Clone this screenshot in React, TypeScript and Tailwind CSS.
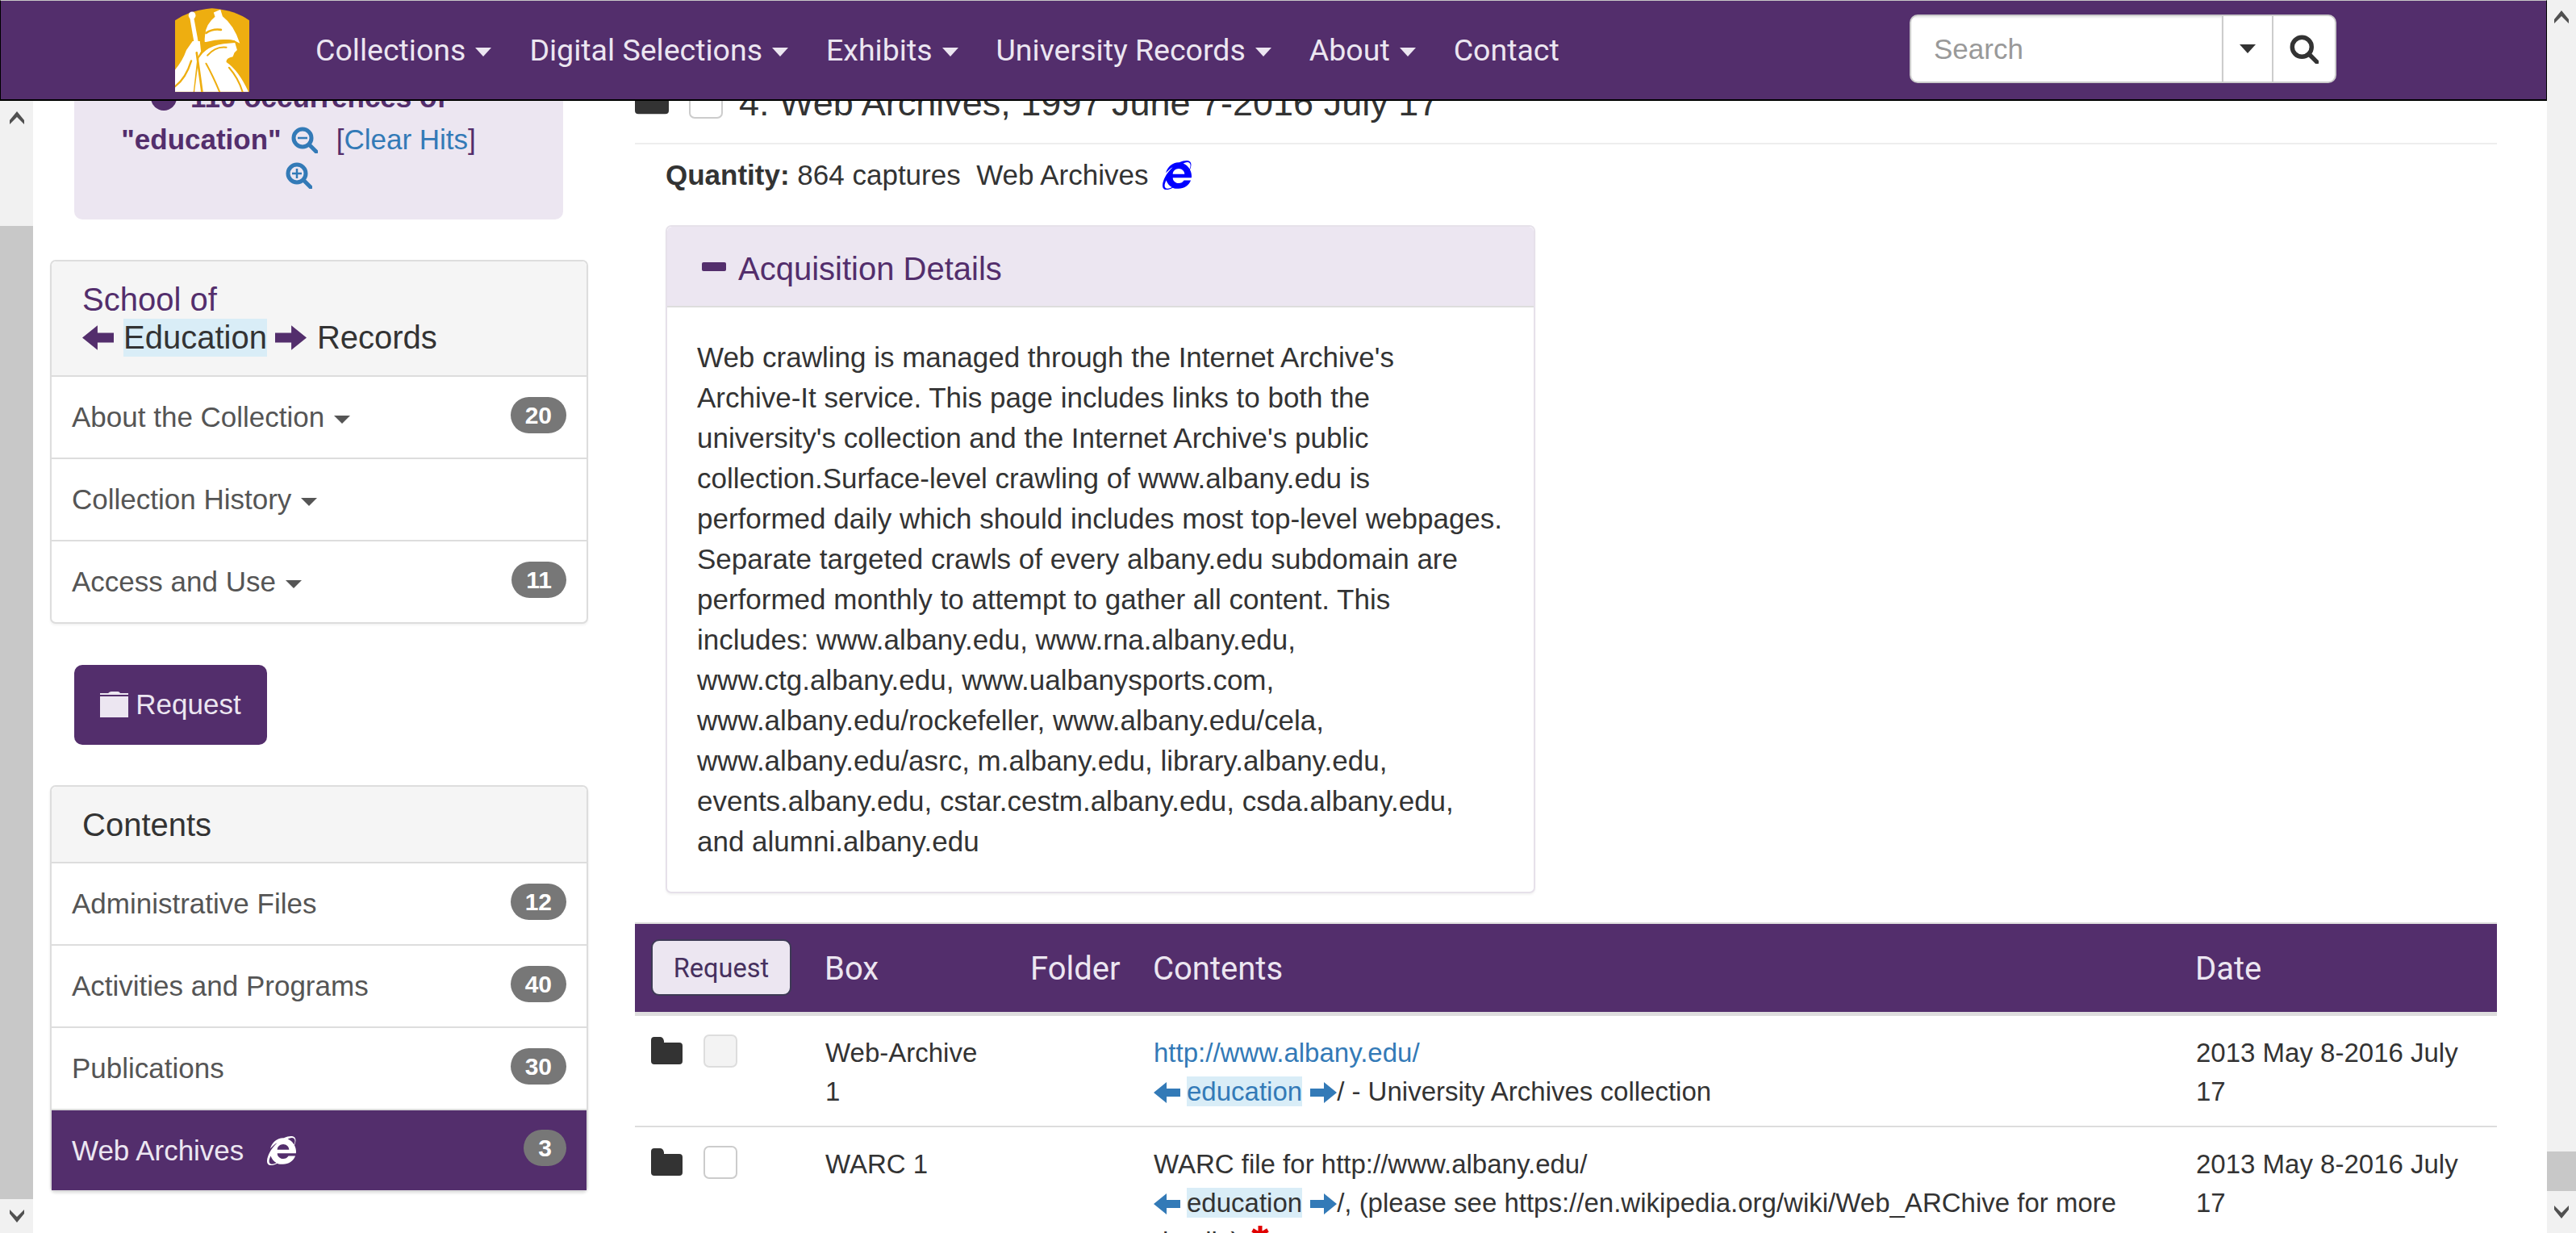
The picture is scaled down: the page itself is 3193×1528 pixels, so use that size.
import { FaInternetExplorer } from "react-icons/fa";

function Caret({ className }: { className: string }) {
  return <span className={`inline-block w-0 h-0 border-x-transparent border-t-current ${className}`} />;
}

function ArrowLeft({ className }: { className: string }) {
  return (
    <svg viewBox="0 0 33 26" className={`inline-block fill-current ${className}`}>
      <path d="M0 13 L16 0 V8 H33 V18 H16 V26 Z" />
    </svg>
  );
}

function ArrowRight({ className }: { className: string }) {
  return (
    <svg viewBox="0 0 33 26" className={`inline-block fill-current ${className}`}>
      <path d="M33 13 L17 0 V8 H0 V18 H17 V26 Z" />
    </svg>
  );
}

function Folder({ className }: { className: string }) {
  return (
    <svg viewBox="0 0 39 34" className={`fill-[#333333] ${className}`}>
      <path d="M4 0 H11 Q15 0 16 5 V7 H35 Q39 7 39 11 V30 Q39 34 35 34 H4 Q0 34 0 30 V4 Q0 0 4 0 Z" />
    </svg>
  );
}

function Magnifier({ sign, className }: { sign?: "plus" | "minus"; className: string }) {
  return (
    <svg viewBox="0 0 33 33" className={`inline-block ${className}`} fill="none" stroke="currentColor">
      <circle cx="14" cy="14" r="11" strokeWidth="5" />
      <path d="M22 22 L31 31" strokeWidth="5" strokeLinecap="round" />
      {sign && <path d="M8 14 H20" strokeWidth="2.5" />}
      {sign === "plus" && <path d="M14 8 V20" strokeWidth="2.5" />}
    </svg>
  );
}

function ScrollArrow({ down }: { down?: boolean }) {
  return (
    <svg viewBox="0 0 18 16" className="w-[18px] h-[16px] fill-[#505050]">
      <path d={down ? "M9 16 L18 5 V0 L9 9 L0 0 V5 Z" : "M9 0 L18 11 V16 L9 7 L0 16 V11 Z"} />
    </svg>
  );
}

function Logo() {
  return (
    <svg viewBox="50 30 275 310" className="w-[92px] h-[104px]">
      <path d="M50 340 V75 Q100 38 187 30 Q275 38 325 75 V340 Z" fill="#eeae10" />
      <g fill="#ffffff">
        <ellipse cx="113" cy="57" rx="13" ry="14" />
        <path d="M105 68 L120 68 L136 155 L120 155 Z" />
        <path d="M160 155 Q156 95 198 62 L193 46 L218 35 L226 60 Q268 92 290 160 L270 150 Q220 140 165 155 Z" />
        <path d="M50 340 V258 Q78 225 92 185 L115 152 L142 152 L146 190 L132 215 L118 340 Z" />
        <path d="M138 215 Q165 170 230 162 L272 158 L280 185 L270 195 L264 210 Q238 215 240 230 Q285 260 322 340 H122 Z" />
      </g>
      <g fill="none" stroke="#eeae10" strokeLinecap="round">
        <path d="M130 195 L150 340" strokeWidth="8" />
        <path d="M165 235 Q190 280 215 340" strokeWidth="6" />
        <path d="M250 250 Q285 290 300 340" strokeWidth="6" />
        <path d="M170 205 Q200 170 240 175" strokeWidth="6" />
        <path d="M50 320 Q90 290 110 225" strokeWidth="7" />
        <path d="M165 122 Q190 105 220 110" strokeWidth="8" />
        <path d="M172 160 Q220 144 268 152" strokeWidth="6" />
      </g>
    </svg>
  );
}

const navItems = [
  { label: "Collections", caret: true },
  { label: "Digital Selections", caret: true },
  { label: "Exhibits", caret: true },
  { label: "University Records", caret: true },
  { label: "About", caret: true },
  { label: "Contact", caret: false },
];

function Header() {
  return (
    <header className="h-[125px] shrink-0 bg-[#532e6c] border-t-[1px] border-t-[#c8c8c8] border-l-[1px] border-l-black border-r-[1px] border-r-black border-b-[2px] border-b-black flex items-start">
      <div className="ml-[216px] mt-[9px]">
        <Logo />
      </div>
      <nav className="flex ml-[82px] mt-[36px] gap-[47px] text-[37.5px] leading-[50px] text-[#ece6f1] font-['Roboto',sans-serif]">
        {navItems.map((item) => (
          <a key={item.label} className="flex items-center whitespace-nowrap">
            {item.label}
            {item.caret && <Caret className="ml-[12px] mt-[4px] border-x-[10px] border-t-[11px]" />}
          </a>
        ))}
      </nav>
      <div className="ml-auto mr-[260px] mt-[17px] w-[529px] h-[85px] flex bg-white border-2 border-[#cccccc] rounded-[10px] overflow-hidden text-[35px]">
        <div className="w-[387px] pl-[28px] flex items-center text-[#999999] border-r-2 border-[#cccccc] shadow-[inset_0_2px_2px_rgba(0,0,0,0.08)]">Search</div>
        <div className="w-[62px] flex items-center justify-center border-r-2 border-[#cccccc] text-[#333333]">
          <Caret className="border-x-[10px] border-t-[11px]" />
        </div>
        <div className="flex-1 flex items-center justify-center text-[#333333]">
          <Magnifier className="w-[36px] h-[36px]" />
        </div>
      </div>
    </header>
  );
}

function Badge({ value }: { value: number }) {
  return (
    <span className="min-w-[50px] h-[45px] px-[18px] mb-[6px] rounded-full bg-[#777777] text-white text-[30px] font-bold leading-[45px] text-center">
      {value}
    </span>
  );
}

function ListItem({ label, count, caret }: { label: string; count?: number; caret?: boolean }) {
  return (
    <div className="h-[102px] last:h-[100px] px-[25px] flex items-center justify-between border-b-2 border-[#dddddd] text-[#555555] last:border-b-0">
      <span className="flex items-center">
        {label}
        {caret && <Caret className="ml-[12px] mt-[6px] border-x-[10px] border-t-[10px]" />}
      </span>
      {count !== undefined && <Badge value={count} />}
    </div>
  );
}

function Sidebar() {
  return (
    <aside className="w-[688px] ml-[21px] shrink-0 -mt-[52px]">
      <div className="ml-[30px] w-[606px] h-[199px] pl-[25px] pr-[75px] pt-[25px] rounded-[10px] bg-[#ece6f1] text-center text-[#532e6c] font-bold">
        <div className="flex items-center justify-center gap-[17px] h-[50px] -mt-[2px]">
          <span className="w-[32px] h-[32px] rounded-full bg-[#532e6c] flex items-center justify-center">
            <span className="w-[18px] h-[5px] bg-[#ece6f1]" />
          </span>
          <span>110 occurrences of</span>
        </div>
        <div className="flex items-center justify-center h-[50px] mt-[2px] whitespace-nowrap">
          <span>"education"</span>
          <Magnifier sign="minus" className="ml-[12px] w-[33px] h-[33px] text-[#337ab7]" />
          <span className="ml-[23px] font-normal">
            [<a className="text-[#337ab7]">Clear Hits</a>]
          </span>
        </div>
        <div className="h-[50px] -mt-[1px] leading-none">
          <Magnifier sign="plus" className="w-[33px] h-[33px] text-[#337ab7]" />
        </div>
      </div>

      <section className="mt-[50px] w-[667px] border-2 border-[#dddddd] rounded-[7px] bg-white shadow-[0_2px_3px_rgba(0,0,0,0.05)]">
        <div className="h-[143px] px-[38px] pt-[24px] bg-[#f5f5f5] border-b-2 border-[#dddddd] rounded-t-[6px] text-[40px] leading-[47px]">
          <div className="text-[#532e6c]">School of</div>
          <div className="flex items-center text-[#333333]">
            <ArrowLeft className="w-[39px] h-[31px] text-[#532e6c]" />
            <mark className="ml-[12px] bg-[#d9edf7] text-[#333333]">Education</mark>
            <ArrowRight className="ml-[10px] w-[39px] h-[31px] text-[#532e6c]" />
            <span className="ml-[13px]">Records</span>
          </div>
        </div>
        <ListItem label="About the Collection" count={20} caret />
        <ListItem label="Collection History" caret />
        <ListItem label="Access and Use" count={11} caret />
      </section>

      <button className="mt-[51px] ml-[30px] w-[239px] h-[99px] pb-[2px] rounded-[10px] bg-[#532e6c] text-[#ece6f1] flex items-center justify-center gap-[9px]">
        <svg viewBox="0 0 35 32" className="w-[35px] h-[32px] fill-[#ece6f1]">
          <path d="M0 2 H10 Q12 0 14 0 H22 Q24 0 25 2 H35 V4 H0 Z M0 6 H35 V32 H0 Z" />
        </svg>
        Request
      </button>

      <section className="mt-[50px] w-[667px] border-2 border-[#dddddd] rounded-[7px] bg-white shadow-[0_2px_3px_rgba(0,0,0,0.1)]">
        <div className="h-[95px] px-[38px] flex items-center bg-[#f5f5f5] border-b-2 border-[#dddddd] rounded-t-[6px] text-[40px] text-[#333333]">
          Contents
        </div>
        <ListItem label="Administrative Files" count={12} />
        <ListItem label="Activities and Programs" count={40} />
        <ListItem label="Publications" count={30} />
        <div className="h-[99px] px-[25px] flex items-center justify-between bg-[#532e6c] text-[#ece6f1]">
          <span className="flex items-center gap-[29px]">
            Web Archives
            <FaInternetExplorer className="w-[36px] h-[36px] text-white" />
          </span>
          <Badge value={3} />
        </div>
      </section>
    </aside>
  );
}

function Highlighted({ link }: { link?: boolean }) {
  return (
    <>
      <ArrowLeft className="w-[33px] h-[26px] text-[#337ab7] align-[-3px]" />
      <mark className={`ml-[8px] bg-[#d9edf7] ${link ? "text-[#337ab7]" : "text-[#333333]"}`}>education</mark>
      <ArrowRight className="ml-[10px] w-[33px] h-[26px] text-[#337ab7] align-[-3px]" />
    </>
  );
}

function ResultRow({ disabled, box, children }: { disabled?: boolean; box: string; children: React.ReactNode }) {
  return (
    <tr className="border-b-2 border-[#dddddd] align-top">
      <td className="pl-[20px] pt-[25px]">
        <div className="flex items-start gap-[26px]">
          <Folder className="w-[39px] h-[34px] mt-[1px]" />
          <span className={`w-[42px] h-[41px] -mt-[2px] rounded-[7px] border-2 border-[#cccccc] ${disabled ? "bg-[#f3f3f3] border-[#dddddd]" : "bg-white"}`} />
        </div>
      </td>
      <td className="pl-[20px] pr-[40px] pt-[22px] pb-[18px]">{box}</td>
      <td />
      <td className="px-[20px] pt-[22px] pb-[18px]">{children}</td>
      <td className="px-[20px] pt-[22px] pb-[18px]">2013 May 8-2016 July 17</td>
    </tr>
  );
}

function Content() {
  return (
    <main className="ml-[37px] w-[2308px] shrink-0 -mt-[22px] text-[#333333]">
      <div className="h-[76px] flex items-start border-b-2 border-[#eeeeee] pl-0">
        <Folder className="w-[42px] h-[40px]" />
        <span className="ml-[25px] w-[42px] h-[44px] rounded-[7px] border-2 border-[#cccccc] bg-white" />
        <h3 className="ml-[20px] text-[45px] leading-[50px] whitespace-nowrap">4: Web Archives, 1997 June 7-2016 July 17</h3>
      </div>

      <p className="mt-[13px] ml-[38px] h-[50px] flex items-center whitespace-pre">
        <b>Quantity:</b> 864 captures  Web Archives
        <FaInternetExplorer className="ml-[18px] w-[36px] h-[36px] text-[#0000ff]" />
      </p>

      <section className="mt-[37px] ml-[38px] w-[1078px] h-[828px] border-2 border-[#e6e1ea] rounded-[7px] bg-white shadow-[0_2px_3px_rgba(0,0,0,0.05)]">
        <div className="h-[100px] pl-[43px] flex items-center gap-[15px] bg-[#ece6f1] border-b-2 border-[#dddddd] rounded-t-[6px] text-[40px] text-[#532e6c]">
          <span className="w-[30px] h-[11px] rounded-[2px] bg-[#532e6c]" />
          <span className="mt-[5px]">Acquisition Details</span>
        </div>
        <div className="px-[37px] py-[37px] text-[#333333]">
          Web crawling is managed through the Internet Archive's Archive-It service. This page includes links to both the university's collection and the Internet Archive's public collection.Surface-level crawling of www.albany.edu is performed daily which should includes most top-level webpages. Separate targeted crawls of every albany.edu subdomain are performed monthly to attempt to gather all content. This includes: www.albany.edu, www.rna.albany.edu, www.ctg.albany.edu, www.ualbanysports.com, www.albany.edu/rockefeller, www.albany.edu/cela, www.albany.edu/asrc, m.albany.edu, library.albany.edu, events.albany.edu, cstar.cestm.albany.edu, csda.albany.edu, and alumni.albany.edu
        </div>
      </section>

      <table className="mt-[36px] w-full table-fixed border-collapse border-t-2 border-[#dddddd] text-[33px] leading-[48px]">
        <colgroup>
          <col className="w-[216px]" />
          <col className="w-[256px]" />
          <col className="w-[151px]" />
          <col className="w-[1292px]" />
          <col />
        </colgroup>
        <thead>
          <tr className="h-[112px] bg-[#532e6c] border-b-[5px] border-[#dddddd] text-[#ece6f1] text-[40px] font-normal font-['Roboto',sans-serif] text-left">
            <th className="pl-[20px] font-normal">
              <button className="w-[174px] h-[70px] pt-[2px] rounded-[10px] bg-[#ece6f1] border-2 border-[#3d3a55] text-[#46305e] text-[32.5px] leading-none">
                Request
              </button>
            </th>
            <th className="pl-[19px] pr-[20px] pt-[4px] font-normal">Box</th>
            <th className="pl-[18px] pr-[10px] pt-[4px] font-normal">Folder</th>
            <th className="pl-[19px] pr-[20px] pt-[4px] font-normal">Contents</th>
            <th className="pl-[19px] pr-[20px] pt-[4px] font-normal">Date</th>
          </tr>
        </thead>
        <tbody>
          <ResultRow disabled box="Web-Archive 1">
            <a className="text-[#337ab7]">http://www.albany.edu/</a>
            <br />
            <Highlighted link />/ - University Archives collection
          </ResultRow>
          <ResultRow box="WARC 1">
            WARC file for http://www.albany.edu/
            <br />
            <Highlighted />/, (please see https://en.wikipedia.org/wiki/Web_ARChive for more details)
            <svg viewBox="0 0 24 24" className="inline-block ml-[14px] w-[24px] h-[24px] align-[8px]" fill="none" stroke="#e00000" strokeWidth="5">
              <path d="M12 1 V23 M2.5 6.5 L21.5 17.5 M21.5 6.5 L2.5 17.5" />
            </svg>
          </ResultRow>
        </tbody>
      </table>
    </main>
  );
}

export default function App() {
  return (
    <div className="w-[3193px] h-[1528px] overflow-hidden flex bg-white text-[35px] leading-[50px] font-['Liberation_Sans',Arial,sans-serif]">
      <div className="w-[3157px] shrink-0 flex flex-col">
        <Header />
        <div className="flex-1 min-h-0 flex overflow-hidden">
          <div className="w-[41px] shrink-0 flex flex-col bg-[#f1f1f1]">
            <div className="h-[42px] flex items-center justify-center shrink-0">
              <ScrollArrow />
            </div>
            <div className="h-[113px] shrink-0" />
            <div className="flex-1 bg-[#c8c8c8]" />
            <div className="h-[42px] flex items-center justify-center shrink-0">
              <ScrollArrow down />
            </div>
          </div>
          <Sidebar />
          <Content />
        </div>
      </div>
      <div className="flex-1 flex flex-col bg-[#f1f1f1]">
        <div className="h-[42px] flex items-center justify-center">
          <ScrollArrow />
        </div>
        <div className="flex-1" />
        <div className="h-[49px] bg-[#c8c8c8]" />
        <div className="h-[52px] flex items-center justify-center">
          <ScrollArrow down />
        </div>
      </div>
    </div>
  );
}
